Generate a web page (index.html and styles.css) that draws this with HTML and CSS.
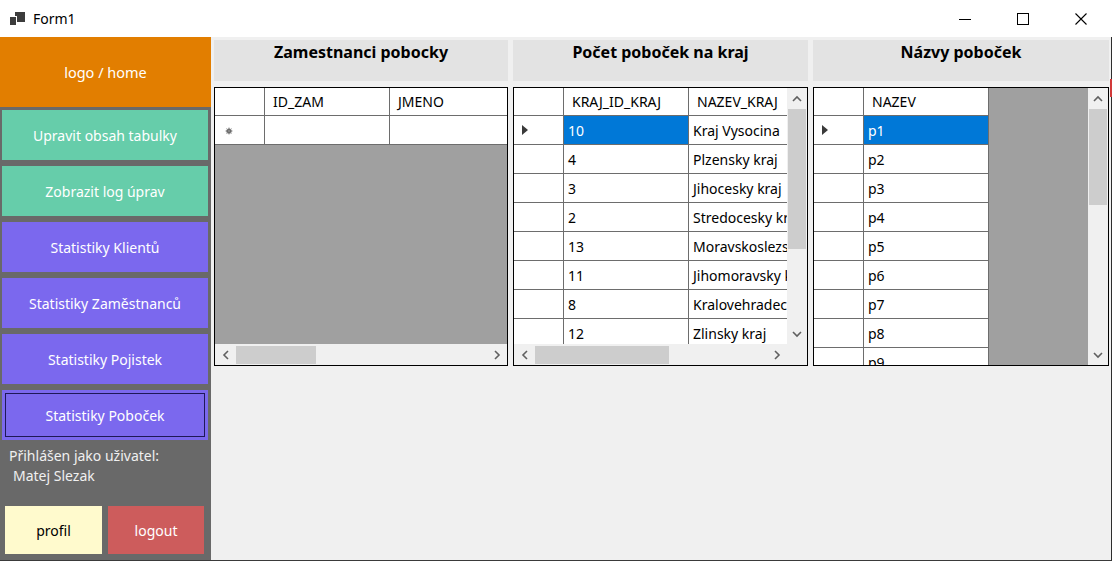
FILE: index.html
```html
<!DOCTYPE html>
<html lang="cs">
<head>
<meta charset="utf-8">
<title>Form1</title>
<link rel="stylesheet" href="styles.css">
</head>
<body>
<div class="window">
  <div class="titlebar">
    <svg class="app-icon" width="18" height="16" viewBox="0 0 18 16">
      <rect x="6" y="1" width="10" height="10" fill="#3c3c3c"/>
      <rect x="0.5" y="5.5" width="7" height="9" fill="#3c3c3c" stroke="#fff" stroke-width="1"/>
    </svg>
    <span class="title">Form1</span>
    <div class="controls">
      <div class="ctl"><svg width="12" height="12" viewBox="0 0 12 12"><line x1="0" y1="6.5" x2="12" y2="6.5" stroke="#000" stroke-width="1"/></svg></div>
      <div class="ctl"><svg width="12" height="12" viewBox="0 0 12 12"><rect x="0.5" y="0.5" width="11" height="11" fill="none" stroke="#000" stroke-width="1"/></svg></div>
      <div class="ctl"><svg width="12" height="12" viewBox="0 0 12 12"><path d="M0.5 0.5 L11.5 11.5 M11.5 0.5 L0.5 11.5" stroke="#000" stroke-width="1.1" fill="none"/></svg></div>
    </div>
  </div>
  <div class="frame">
    <aside class="sidebar">
      <div class="home">logo / home</div>
      <div class="nav">
        <div class="navbtn green">Upravit obsah tabulky</div>
        <div class="navbtn green">Zobrazit log úprav</div>
        <div class="navbtn purple">Statistiky Klientů</div>
        <div class="navbtn purple">Statistiky Zaměstnanců</div>
        <div class="navbtn purple">Statistiky Pojistek</div>
        <div class="navbtn purple focused">Statistiky Poboček</div>
      </div>
      <div class="user">
        <div>Přihlášen jako uživatel:</div>
        <div class="username">Matej Slezak</div>
      </div>
      <div class="account">
        <div class="accbtn profil">profil</div>
        <div class="accbtn logout">logout</div>
      </div>
    </aside>
    <main class="content">
      <section class="panel">
        <div class="panel-head">Zamestnanci pobocky</div>
        <div class="dgv">
          <div class="dgv-top">
            <div class="dgv-view">
              <div class="row head"><div class="cell rh"></div><div class="cell c1">ID_ZAM</div><div class="cell c1">JMENO</div></div>
              <div class="row"><div class="cell rh"><svg class="newrow" width="8" height="8" viewBox="0 0 8 8"><circle cx="4" cy="4" r="2.6" fill="#555"/><path d="M4 0.5 V7.5 M0.5 4 H7.5 M1.5 1.5 L6.5 6.5 M6.5 1.5 L1.5 6.5" stroke="#888" stroke-width="0.9"/></svg></div><div class="cell c1"></div><div class="cell c1"></div></div>
            </div>
          </div>
          <div class="hscroll">
            <div class="sbtn"><svg width="8" height="10" viewBox="0 0 8 10"><path d="M6 1 L2 5 L6 9" fill="none" stroke="#606060" stroke-width="1.6"/></svg></div>
            <div class="htrack"><div class="hthumb t1"></div></div>
            <div class="sbtn"><svg width="8" height="10" viewBox="0 0 8 10"><path d="M2 1 L6 5 L2 9" fill="none" stroke="#606060" stroke-width="1.6"/></svg></div>
          </div>
        </div>
      </section>
      <section class="panel">
        <div class="panel-head">Počet poboček na kraj</div>
        <div class="dgv">
          <div class="dgv-top">
            <div class="dgv-view">
              <div class="row head"><div class="cell rh"></div><div class="cell c1">KRAJ_ID_KRAJ</div><div class="cell c1">NAZEV_KRAJ</div></div>
              <div class="row"><div class="cell rh"><svg class="cur" width="6" height="10" viewBox="0 0 6 10"><path d="M0 0 L6 5 L0 10 Z" fill="#3a3a3a"/></svg></div><div class="cell c1 sel">10</div><div class="cell c1">Kraj Vysocina</div></div>
              <div class="row"><div class="cell rh"></div><div class="cell c1">4</div><div class="cell c1">Plzensky kraj</div></div>
              <div class="row"><div class="cell rh"></div><div class="cell c1">3</div><div class="cell c1">Jihocesky kraj</div></div>
              <div class="row"><div class="cell rh"></div><div class="cell c1">2</div><div class="cell c1">Stredocesky kraj</div></div>
              <div class="row"><div class="cell rh"></div><div class="cell c1">13</div><div class="cell c1">Moravskoslezsky kraj</div></div>
              <div class="row"><div class="cell rh"></div><div class="cell c1">11</div><div class="cell c1">Jihomoravsky kraj</div></div>
              <div class="row"><div class="cell rh"></div><div class="cell c1">8</div><div class="cell c1">Kralovehradecky kraj</div></div>
              <div class="row"><div class="cell rh"></div><div class="cell c1">12</div><div class="cell c1">Zlinsky kraj</div></div>
            </div>
            <div class="vscroll">
              <div class="sbtn"><svg width="10" height="8" viewBox="0 0 10 8"><path d="M1 6 L5 2 L9 6" fill="none" stroke="#606060" stroke-width="1.6"/></svg></div>
              <div class="vtrack"><div class="vthumb t2"></div></div>
              <div class="sbtn"><svg width="10" height="8" viewBox="0 0 10 8"><path d="M1 2 L5 6 L9 2" fill="none" stroke="#606060" stroke-width="1.6"/></svg></div>
            </div>
          </div>
          <div class="hscroll">
            <div class="sbtn"><svg width="8" height="10" viewBox="0 0 8 10"><path d="M6 1 L2 5 L6 9" fill="none" stroke="#606060" stroke-width="1.6"/></svg></div>
            <div class="htrack"><div class="hthumb t2h"></div></div>
            <div class="sbtn"><svg width="8" height="10" viewBox="0 0 8 10"><path d="M2 1 L6 5 L2 9" fill="none" stroke="#606060" stroke-width="1.6"/></svg></div>
            <div class="corner"></div>
          </div>
        </div>
      </section>
      <section class="panel">
        <div class="panel-head">Názvy poboček<span class="redmark"></span></div>
        <div class="dgv">
          <div class="dgv-top">
            <div class="dgv-view">
              <div class="row head"><div class="cell rh"></div><div class="cell c1">NAZEV</div></div>
              <div class="row"><div class="cell rh"><svg class="cur" width="6" height="10" viewBox="0 0 6 10"><path d="M0 0 L6 5 L0 10 Z" fill="#3a3a3a"/></svg></div><div class="cell c1 sel">p1</div></div>
              <div class="row"><div class="cell rh"></div><div class="cell c1">p2</div></div>
              <div class="row"><div class="cell rh"></div><div class="cell c1">p3</div></div>
              <div class="row"><div class="cell rh"></div><div class="cell c1">p4</div></div>
              <div class="row"><div class="cell rh"></div><div class="cell c1">p5</div></div>
              <div class="row"><div class="cell rh"></div><div class="cell c1">p6</div></div>
              <div class="row"><div class="cell rh"></div><div class="cell c1">p7</div></div>
              <div class="row"><div class="cell rh"></div><div class="cell c1">p8</div></div>
              <div class="row"><div class="cell rh"></div><div class="cell c1">p9</div></div>
            </div>
            <div class="vscroll">
              <div class="sbtn"><svg width="10" height="8" viewBox="0 0 10 8"><path d="M1 6 L5 2 L9 6" fill="none" stroke="#606060" stroke-width="1.6"/></svg></div>
              <div class="vtrack"><div class="vthumb t3"></div></div>
              <div class="sbtn"><svg width="10" height="8" viewBox="0 0 10 8"><path d="M1 2 L5 6 L9 2" fill="none" stroke="#606060" stroke-width="1.6"/></svg></div>
            </div>
          </div>
        </div>
      </section>
    </main>
  </div>
</div>
</body>
</html>
```
FILE: styles.css
```css
* { box-sizing: border-box; }
html, body { margin: 0; padding: 0; }
body {
  width: 1113px;
  height: 561px;
  overflow: hidden;
  background: #fff;
  font-family: "Noto Sans", "Open Sans", sans-serif;
  font-size: 14px;
  color: #000;
}
.window { width: 1113px; height: 561px; display: flex; flex-direction: column; }

.titlebar { height: 37px; display: flex; align-items: center; background: #fff; flex: none; }
.app-icon { margin-left: 9px; margin-top: 1px; }
.title { margin-left: 6px; font-size: 14px; }
.controls { margin-left: auto; display: flex; margin-right: 3px; }
.ctl { width: 58px; height: 37px; display: flex; align-items: center; justify-content: center; }

.frame {
  flex: 1;
  display: flex;
  width: 1112px;
  border-right: 1px solid #2e2e2e;
  border-bottom: 1px solid #3a3a3a;
  min-height: 0;
}

.sidebar {
  width: 211px;
  flex: none;
  background: #696969;
  display: flex;
  flex-direction: column;
}
.home {
  height: 70px;
  background: #e27e00;
  color: #fff;
  display: flex;
  align-items: center;
  justify-content: center;
  margin-bottom: 3px;
  font-size: 14.5px;
}
.nav { display: flex; flex-direction: column; gap: 6px; padding-left: 2px; }
.navbtn {
  width: 206px;
  height: 50px;
  display: flex;
  align-items: center;
  justify-content: center;
  color: #fff;
  font-size: 14px;
}
.green { background: #66cdaa; }
.purple { background: #7b68ee; }
.focused { outline: 1px solid #1e1858; outline-offset: -4px; }

.user {
  color: #f0f0f0;
  padding-left: 9px;
  margin-top: 6px;
  line-height: 20px;
  font-size: 14px;
}
.username { padding-left: 4px; }

.account {
  margin-top: auto;
  display: flex;
  gap: 6px;
  padding: 0 0 6px 5px;
}
.accbtn {
  height: 48px;
  display: flex;
  align-items: center;
  justify-content: center;
  font-size: 14px;
}
.profil { width: 97px; background: #fffacd; color: #000; }
.logout { width: 96px; background: #cd5c5c; color: #fff; }

.content {
  flex: 1;
  background: #f0f0f0;
  padding: 3px 2px 0 3px;
  display: grid;
  grid-template-columns: 294px 295px 296px;
  column-gap: 5px;
  align-content: start;
  min-width: 0;
}
.panel { display: flex; flex-direction: column; min-width: 0; position: relative; }
.panel-head {
  height: 41px;
  background: #e3e3e3;
  text-align: center;
  font-weight: 700;
  font-size: 16px;
  padding-top: 1px;
  margin-bottom: 6px;
}
.redmark {
  position: absolute;
  right: -3px;
  top: 39px;
  width: 2px;
  height: 18px;
  background: #d23a3a;
}

.dgv {
  height: 279px;
  border: 1px solid #000;
  background: #a0a0a0;
  display: flex;
  flex-direction: column;
  overflow: hidden;
}
.dgv-top { flex: 1; display: flex; min-height: 0; }
.dgv-view { flex: 1; overflow: hidden; min-width: 0; }
.row { display: flex; width: max-content; }
.cell {
  flex: none;
  height: 29px;
  background: #fff;
  border-right: 1px solid #6d6d6d;
  border-bottom: 1px solid #6d6d6d;
  padding-left: 4px;
  display: flex;
  align-items: center;
  white-space: nowrap;
  overflow: hidden;
  font-size: 14px;
}
.head .cell { height: 28px; padding-left: 8px; }
.rh { width: 50px; padding-left: 0; }
.c1 { width: 125px; }
.sel { background: #0078d7; color: #fff; }
.cur { margin-left: 8px; }
.newrow { margin-left: 10px; margin-top: 2px; }

.hscroll { height: 21px; flex: none; display: flex; background: #f0f0f0; }
.hscroll .sbtn { width: 21px; height: 21px; }
.htrack { flex: 1; position: relative; }
.hthumb { position: absolute; top: 2px; bottom: 1px; background: #cdcdcd; left: 0; }
.t1 { width: 80px; }
.t2h { width: 134px; }
.corner { width: 20px; background: #f0f0f0; }

.vscroll { width: 20px; flex: none; display: flex; flex-direction: column; background: #f0f0f0; }
.vscroll .sbtn { height: 21px; }
.vtrack { flex: 1; position: relative; }
.vthumb { position: absolute; left: 1px; right: 1px; top: 0; background: #cdcdcd; }
.t2 { height: 140px; }
.t3 { height: 96px; }

.sbtn { display: flex; align-items: center; justify-content: center; flex: none; }
```
